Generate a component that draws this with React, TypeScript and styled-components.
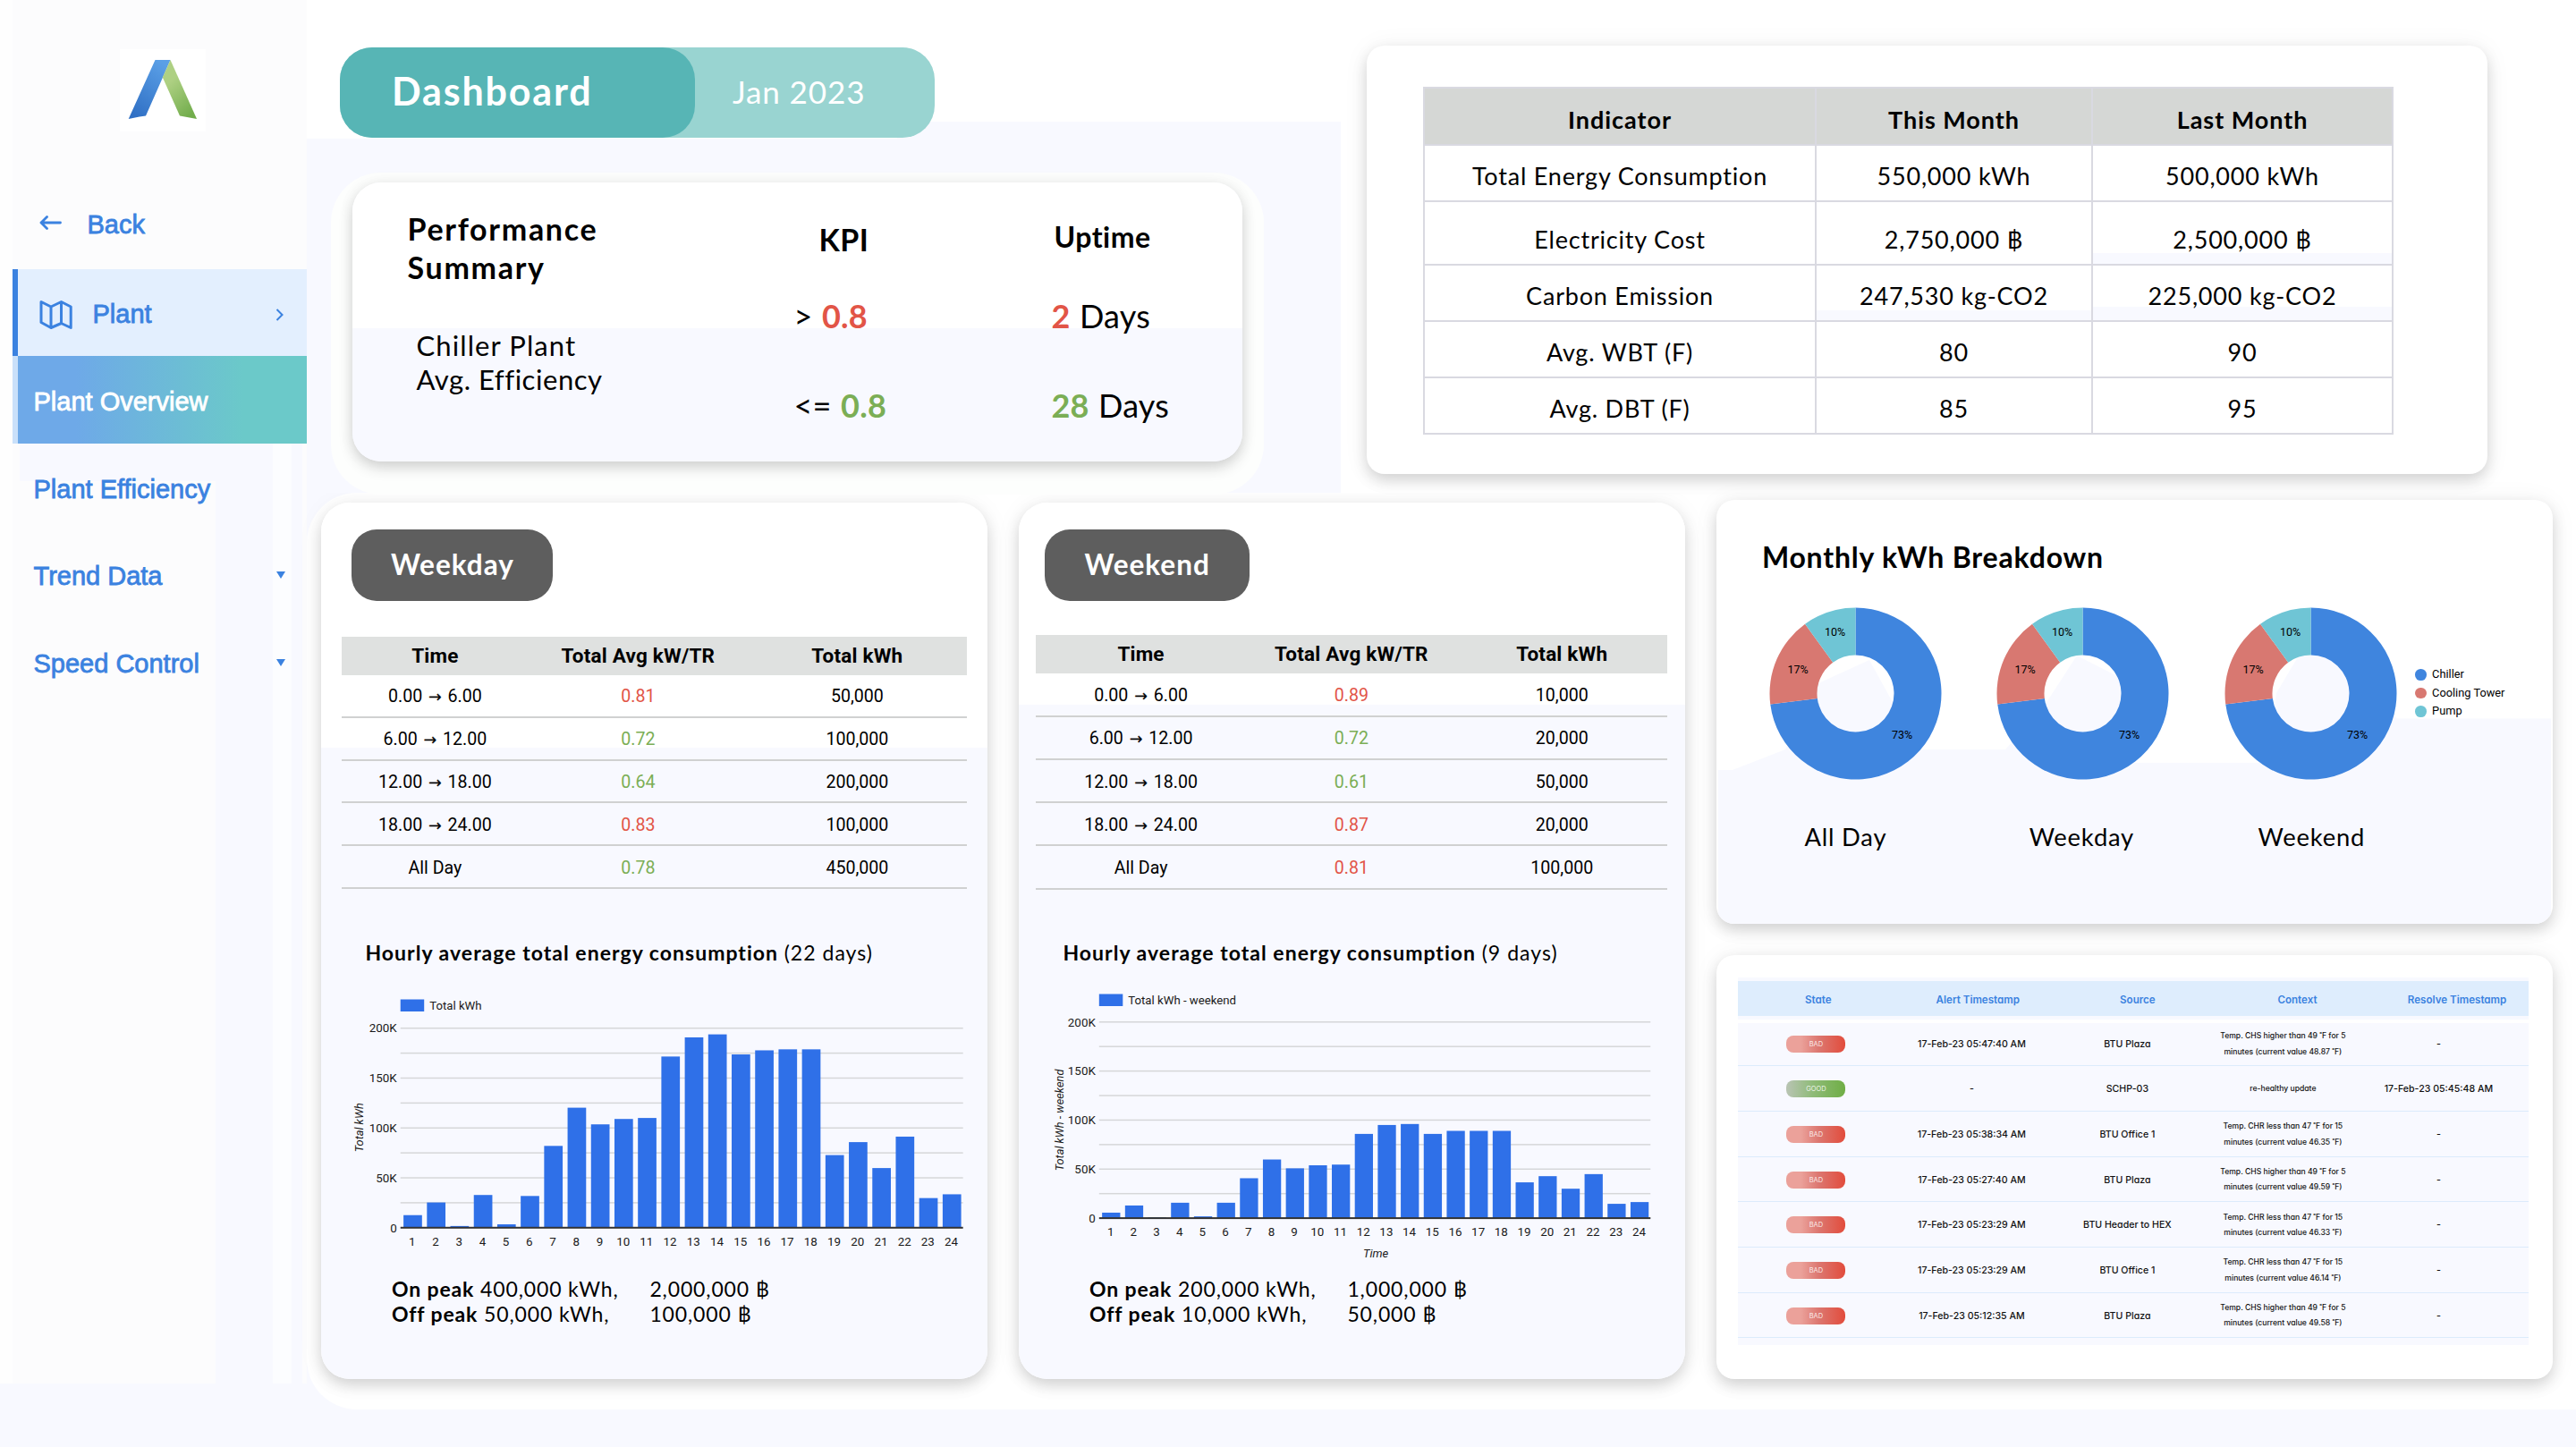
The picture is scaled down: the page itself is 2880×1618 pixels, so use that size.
import React from "react";
import styled, { createGlobalStyle, css } from "styled-components";

const BLUE = "#3b82e0";
const TINT = "#f8f9ff";
const RED = "#e25547";
const GREEN = "#7bae55";
const ROUND = `Lato, "Noto Sans", sans-serif`;

const GlobalStyle = createGlobalStyle`
  * { box-sizing: border-box; }
  body { margin: 0; background: ${TINT}; font-family: ${ROUND}; color: #000; }
`;

const Page = styled.div`
  display: flex;
  width: 2880px;
  height: 1618px;
  overflow: hidden;
  background: ${TINT};
`;

/* ---------- Sidebar ---------- */
const Sidebar = styled.nav`
  flex: none;
  width: 343px;
  height: 1547px;
  padding-left: 14px;
  background:
    linear-gradient(${TINT}, ${TINT}) 241px 496px / 64px 1051px no-repeat,
    linear-gradient(#fcfdff, #fcfdff) 305px 496px / 21px 1051px no-repeat,
    linear-gradient(${TINT}, ${TINT}) 326px 496px / 12px 1051px no-repeat,
    linear-gradient(${TINT}, ${TINT}) 22px 496px / 219px 42px no-repeat,
    linear-gradient(#fcfcfd, #fcfcfd) 14px 0 / 329px 100% no-repeat,
    #fefefe;
  font-family: "Liberation Sans", Arial, sans-serif;
  font-size: 29px;
  color: ${BLUE};
`;
const LogoBox = styled.div`
  display: flex;
  width: 96px;
  height: 92px;
  margin: 55px 0 48px 120px;
  background: #fff;
`;
const NavItem = styled.div<{ $h?: number; $active?: boolean; $selected?: boolean }>`
  display: flex;
  align-items: center;
  height: ${(p) => p.$h ?? 97.6}px;
  padding: 6px 26px 0 23.5px;
  -webkit-text-stroke: 0.8px currentColor;
  svg { flex: none; }
  ${(p) => p.$active && css`
    padding-top: 4px;
    border-left: 6px solid ${BLUE};
    background: #e3effe;
  `}
  ${(p) => p.$selected && css`
    padding-left: 17.5px;
    border-left: 6px solid #c9e0fa;
    color: #fff;
    background: linear-gradient(90deg, #6ea9e8 20%, #6bc9c9 78%);
    background-clip: padding-box;
  `}
`;
const NavText = styled.span<{ $gap?: number }>`
  flex: 1;
  margin-left: ${(p) => p.$gap ?? 0}px;
`;
const Caret = styled.i`
  border: 5.5px solid transparent;
  border-top: 8px solid ${BLUE};
  border-bottom: 0;
  margin: -4px -2px 0 0;
`;
const BackWrap = styled.span`
  display: flex;
  margin: -4px 0 0 6px;
`;

/* ---------- Frames ---------- */
const Main = styled.main`
  display: flex;
  flex-direction: column;
  flex: 1;
`;
const TopRow = styled.section`
  position: relative;
  display: flex;
  height: 551px;
  background:
    linear-gradient(${TINT}, ${TINT}) 0 155px / 1156px 396px no-repeat,
    linear-gradient(${TINT}, ${TINT}) 660px 136px / 496px 20px no-repeat,
    #fff;
`;
const TopLeft = styled.div`
  width: 1185px;
  padding: 53px 0 0 37px;
`;
const BottomRow = styled.section`
  display: flex;
  height: 1025px;
  padding: 11px 0 0 16.4px;
  border-radius: 56px 0 0 56px;
  background: #fff;
`;
const Card = styled.div`
  background: #fff;
  border-radius: 20px;
  box-shadow: 0 7px 16px rgba(0, 0, 0, 0.15), 0 2px 30px rgba(0, 0, 0, 0.06);
`;

/* ---------- Title pill ---------- */
const TitlePill = styled.header`
  display: flex;
  width: 665px;
  height: 101px;
  border-radius: 36px;
  background: #99d4d1;
  color: #fff;
`;
const TitleMain = styled.h1`
  width: 397px;
  margin: 0;
  padding-left: 58px;
  border-radius: 36px;
  background: #57b5b5;
  font-size: 43px;
  line-height: 97px;
  letter-spacing: 1.85px;
`;
const TitleMonth = styled.span`
  padding-left: 42px;
  font-size: 35px;
  line-height: 98px;
  letter-spacing: 0.9px;
`;

/* ---------- Performance summary ---------- */
const PerfCard = styled(Card)`
  display: flex;
  width: 995px;
  height: 311.5px;
  margin: 50px 0 0 13.5px;
  border-radius: 32px;
  background: linear-gradient(#fff 163px, ${TINT} 163px);
  box-shadow: 0 7px 16px rgba(0, 0, 0, 0.16), 0 0 18px rgba(0, 0, 0, 0.05), 0 13px 0 24px #fdfefd;
`;
const PerfNames = styled.div`
  flex: none;
  width: 494px;
  padding: 30px 0 0 62px;
`;
const PerfTitle = styled.h2`
  margin: 0;
  width: 260px;
  font-size: 34px;
  line-height: 43px;
  letter-spacing: 1.7px;
`;
const PerfMetric = styled.div`
  padding: 47px 0 0 10px;
  font-size: 31px;
  line-height: 38.4px;
`;
const Spaced = styled.div<{ $ls: number }>`
  letter-spacing: ${(p) => p.$ls}px;
`;
const PerfColumn = styled.div<{ $top: number; $width: number }>`
  flex: none;
  width: ${(p) => p.$width}px;
  padding-top: ${(p) => p.$top}px;
  line-height: 50px;
`;
const PerfHead = styled.h3<{ $indent: number; $size: number; $gap: number }>`
  margin: 0 0 ${(p) => p.$gap}px ${(p) => p.$indent}px;
  font-size: ${(p) => p.$size}px;
  letter-spacing: 0.5px;
`;
const PerfValue = styled.div`
  margin-bottom: 50px;
  font-size: 36px;
  letter-spacing: 0.2px;
  word-spacing: 1px;
`;
const Accent = styled.b<{ $tone: string }>`
  color: ${(p) => p.$tone};
`;

/* ---------- Indicator table ---------- */
const IndicatorCard = styled(Card)`
  width: 1253px;
  height: 479.5px;
  margin-top: 50.5px;
  padding: 46px 0 0 63px;
`;
const IndicatorTable = styled.table`
  width: 1083px;
  table-layout: fixed;
  border-collapse: collapse;
  font-size: 27px;
  letter-spacing: 0.8px;
  text-align: center;
  th, td { border: 2.5px solid #d9d9e1; padding: 7px 0 0; line-height: 30px; }
  th { background: #d5d7d5; height: 64px; padding-top: 9px; letter-spacing: 0.95px; }
`;
const IndicatorRow = styled.tr<{ $h: number; $drop?: boolean }>`
  height: ${(p) => p.$h}px;
  ${(p) => p.$drop && css`td { padding-top: 15px; }`}
`;
const ShadeCell = styled.td<{ $shade: number }>`
  background: linear-gradient(${TINT}, ${TINT}) bottom / 100% ${(p) => p.$shade}px no-repeat;
`;

/* ---------- Weekday / weekend ---------- */
const DayCard = styled(Card)<{ $split: number }>`
  display: flex;
  flex-direction: column;
  flex: none;
  width: 745px;
  height: 979.5px;
  margin-right: 35px;
  padding-top: 30px;
  border-radius: 32px;
  background: linear-gradient(#fff ${(p) => p.$split}px, ${TINT} ${(p) => p.$split}px);
`;
const DayPill = styled.h2<{ $x: number; $width: number }>`
  width: ${(p) => p.$width}px;
  height: 80px;
  margin: 0 0 0 ${(p) => p.$x}px;
  border-radius: 28px;
  background: #5e5e5e;
  color: #fff;
  font-size: 31.5px;
  line-height: 79px;
  letter-spacing: 1px;
  text-align: center;
`;
const EnergySlot = styled.div<{ $x: number; $top: number }>`
  height: 377px;
  padding: ${(p) => p.$top}px 0 0 ${(p) => p.$x}px;
`;
const EnergyGrid = styled.div<{ $cols: string; $width: number; $row: number }>`
  width: ${(p) => p.$width}px;
  font-family: Roboto, sans-serif;
  font-size: 19.6px;
  text-align: center;
  & > div {
    display: grid;
    grid-template-columns: ${(p) => p.$cols};
    align-items: center;
    height: ${(p) => p.$row}px;
  }
  & > div:first-child { height: 43px; }
`;
const EnergyHead = styled.div`
  padding-bottom: 1px;
  background: #dfe1e0;
  font-size: 22.5px;
  font-weight: 700;
  letter-spacing: 0.2px;
`;
const EnergyRow = styled.div`
  padding-top: 2px;
  border-bottom: 2px solid #d0d1d1;
`;
const Arrow = styled.span`
  margin: 0 2px;
  font-family: "DejaVu Sans", sans-serif;
  font-size: 17.5px;
  line-height: 1;
  -webkit-text-stroke: 0.2px currentColor;
`;
const Tone = styled.span<{ $tone: string }>`
  color: ${(p) => p.$tone};
`;
const HourlyTitle = styled.h3`
  margin: 0 0 0 49px;
  font-size: 23px;
  line-height: 33px;
  height: 32px;
  letter-spacing: 1.03px;
  white-space: nowrap;
  span { font-weight: 400; }
`;
const ChartSvg = styled.svg`
  flex: none;
  display: block;
  font-family: Roboto, sans-serif;
  font-size: 13.4px;
  fill: #1a1a1a;
`;
const Peaks = styled.div`
  display: grid;
  grid-template-columns: 288.5px auto;
  margin-left: 78.5px;
  font-size: 23px;
  line-height: 28px;
  letter-spacing: 0.87px;
  white-space: pre;
`;

/* ---------- Right column ---------- */
const RightColumn = styled.div`
  display: flex;
  flex-direction: column;
  width: 935px;
  margin-top: -3px;
  gap: 35px;
`;
const BreakdownCard = styled(Card)`
  position: relative;
  flex: none;
  height: 474px;
  padding-top: 43px;
`;
const BreakdownTint = styled.svg`
  position: absolute;
  left: 0;
  top: 0;
  border-radius: 20px;
`;
const BreakdownTitle = styled.h2`
  position: relative;
  margin: 0 0 0 50.5px;
  font-size: 32px;
  line-height: 42px;
  letter-spacing: 0.8px;
`;
const DonutRow = styled.div`
  position: relative;
  display: flex;
  align-items: center;
  height: 194px;
  margin-top: 34px;
  padding-left: 58.3px;
  gap: 61.6px;
`;
const DonutSvg = styled.svg`
  flex: none;
  font-family: Roboto, sans-serif;
  font-size: 12.5px;
  text-anchor: middle;
`;
const Legend = styled.ul`
  margin: 0 0 0 -41px;
  padding: 0;
  list-style: none;
  font: 12.8px/20.6px Roboto, sans-serif;
  li { display: flex; align-items: center; gap: 6px; white-space: nowrap; }
`;
const Dot = styled.i<{ $tone: string }>`
  width: 12.6px;
  height: 12.6px;
  border-radius: 50%;
  background: ${(p) => p.$tone};
`;
const DonutLabels = styled.div`
  position: relative;
  display: grid;
  grid-template-columns: 264px 264px 250px;
  margin: 47px 0 0 12px;
  font-size: 27.4px;
  line-height: 34px;
  letter-spacing: 0.8px;
  text-align: center;
`;

const AlertsCard = styled(Card)`
  flex: none;
  height: 473.5px;
  padding: 25px 0 0 24px;
`;
const AlertHead = styled.div`
  display: grid;
  grid-template-columns: repeat(5, 178.6px);
  align-items: center;
  overflow: hidden;
  width: 884px;
  height: 47px;
  padding-top: 2px;
  border: solid ${TINT};
  border-width: 4px 0;
  background: #deedfd;
  color: ${BLUE};
  font: 600 11.6px Inter, sans-serif;
  font-feature-settings: "cv11";
  text-align: center;
`;
const AlertBody = styled.div`
  width: 884px;
  height: 360px;
  margin-top: 4px;
  background: ${TINT};
`;
const AlertRow = styled.div`
  display: grid;
  grid-template-columns: repeat(5, 174px);
  align-items: center;
  justify-items: center;
  height: 50.7px;
  padding-top: 1.5px;
  border-bottom: 1.5px solid #dcebfc;
  font: 500 10.6px Inter, sans-serif;
  font-feature-settings: "cv11";
  color: #111;
  text-align: center;
  &:first-child { height: 48.3px; padding-top: 0; }
`;
const StatePill = styled.span<{ $good: boolean }>`
  width: 66px;
  height: 19px;
  border-radius: 8px;
  background: ${(p) => p.$good
    ? "linear-gradient(90deg, #b9c4b4, #8fbb78 45%, #6fae45)"
    : "linear-gradient(90deg, #eba19a 25%, #dc7770 55%, #e24c3c)"};
  color: rgba(255, 255, 255, 0.85);
  font-size: 7.5px;
  font-weight: 400;
  line-height: 20px;
`;
const Context = styled.span`
  font-size: 8.6px;
  line-height: 17.4px;
  white-space: pre-line;
`;

/* ---------- Data ---------- */
type EnergyRecord = [string, string, string, string];
const weekdayRows: EnergyRecord[] = [
  ["0.00", "6.00", "0.81", "50,000"],
  ["6.00", "12.00", "0.72", "100,000"],
  ["12.00", "18.00", "0.64", "200,000"],
  ["18.00", "24.00", "0.83", "100,000"],
  ["All Day", "", "0.78", "450,000"],
];
const weekendRows: EnergyRecord[] = [
  ["0.00", "6.00", "0.89", "10,000"],
  ["6.00", "12.00", "0.72", "20,000"],
  ["12.00", "18.00", "0.61", "50,000"],
  ["18.00", "24.00", "0.87", "20,000"],
  ["All Day", "", "0.81", "100,000"],
];
const weekdayHours = [12.6, 25.3, 1.7, 32.8, 3.4, 31.8, 82, 120.3, 103.6, 109, 110, 171.6, 190.8, 193.8, 173.7, 177.8, 178.8, 178.8, 72.8, 85.8, 59.8, 91.3, 29.7, 33.5];
const weekendHours = [5.6, 12.9, 0.8, 15.7, 1.8, 15.7, 40.7, 59.8, 50.8, 53.9, 54.6, 85.9, 95, 96, 85.9, 89, 89, 89, 36.5, 42.8, 30, 44.9, 14.6, 16.4];

const high = (v: string) => `Temp. CHS higher than 49 ˚F for 5\nminutes (current value ${v} ˚F)`;
const low = (v: string) => `Temp. CHR less than 47 ˚F for 15\nminutes (current value ${v} ˚F)`;
const alerts = [
  ["BAD", "17-Feb-23 05:47:40 AM", "BTU Plaza", high("48.87"), "-"],
  ["GOOD", "-", "SCHP-03", "re-healthy update", "17-Feb-23 05:45:48 AM"],
  ["BAD", "17-Feb-23 05:38:34 AM", "BTU Office 1", low("46.35"), "-"],
  ["BAD", "17-Feb-23 05:27:40 AM", "BTU Plaza", high("49.59"), "-"],
  ["BAD", "17-Feb-23 05:23:29 AM", "BTU Header to HEX", low("46.33"), "-"],
  ["BAD", "17-Feb-23 05:23:29 AM", "BTU Office 1", low("46.14"), "-"],
  ["BAD", "17-Feb-23 05:12:35 AM", "BTU Plaza", high("49.58"), "-"],
];
const sources = [
  ["Chiller", "#3f85de"],
  ["Cooling Tower", "#d87871"],
  ["Pump", "#6fc5d5"],
];

/* ---------- Parts ---------- */
const Logo = () => (
  <svg width="96" height="92" viewBox="134 55 96 92">
    <defs>
      <linearGradient id="lb" x1="0.7" y1="0" x2="0.2" y2="1">
        <stop offset="0" stopColor="#5a9fe6" />
        <stop offset="1" stopColor="#2f6fc4" />
      </linearGradient>
      <linearGradient id="lg" x1="0.2" y1="0" x2="0.7" y2="1">
        <stop offset="0.3" stopColor="#aed083" />
        <stop offset="1" stopColor="#72ad4c" />
      </linearGradient>
    </defs>
    <path d="M173.5 67H190.5L181.8 87L163 129.5L156 130.5L143.7 133Z" fill="url(#lb)" />
    <path d="M190.5 67L220 133L201 129.5L181.8 86.5Z" fill="url(#lg)" />
  </svg>
);
const BackIcon = () => (
  <svg width="25" height="18" viewBox="0 0 25 18" fill="none" stroke={BLUE} strokeWidth="2.8" strokeLinecap="round" strokeLinejoin="round">
    <path d="M23.5 9H2M8.5 2.5L2 9L8.5 15.5" />
  </svg>
);
const MapIcon = () => (
  <svg width="37" height="34" viewBox="43 333 37 34" fill="none" stroke={BLUE} strokeWidth="3" strokeLinejoin="round">
    <path d="M45 335.5L56 341L67.5 335.5L78.2 341V364.5L67.5 359.5L56 364.5L45 358.5ZM56 341V364M67.5 335.5V359.5" />
  </svg>
);
const ChevronIcon = () => (
  <svg width="9" height="14" viewBox="0 0 9 14" fill="none" stroke={BLUE} strokeWidth="2">
    <path d="M1.5 1L7.5 7L1.5 13" />
  </svg>
);

type EnergyTableProps = { rows: EnergyRecord[]; cols: string; width: number; rowHeight: number };
const EnergyTable = ({ rows, cols, width, rowHeight }: EnergyTableProps) => (
  <EnergyGrid $cols={cols} $width={width} $row={rowHeight}>
    <EnergyHead>
      <span>Time</span>
      <span>Total Avg kW/TR</span>
      <span>Total kWh</span>
    </EnergyHead>
    {rows.map(([from, to, avg, kwh]) => (
      <EnergyRow key={from}>
        <span>
          {from}
          {to && <> <Arrow>→</Arrow> {to}</>}
        </span>
        <Tone $tone={Number(avg) > 0.8 ? RED : GREEN}>{avg}</Tone>
        <span>{kwh}</span>
      </EnergyRow>
    ))}
  </EnergyGrid>
);

type ChartProps = {
  values: number[];
  left: number;
  width: number;
  top: number;
  height: number;
  legend: string;
  legendY: number;
  time?: boolean;
};
const HourChart = ({ values, left, width, top, height, legend, legendY, time }: ChartProps) => {
  const base = top + height;
  const pitch = width / 24;
  const axisX = time ? 50 : 47;
  const axisY = top + height / 2 - (time ? 0 : 0.5);
  return (
    <ChartSvg width="745" height="345.6" viewBox="0 0 745 345.6">
      <rect x={left} y={legendY} width="26.5" height="13.5" fill="#2f70e8" />
      <text x={left + 32.5} y={legendY + 11.6} fontSize="13.2">{legend}</text>
      {Array.from({ length: 8 }, (_, i) => (
        <rect key={i} x={left} y={top + (height * i) / 8 - 0.75} width={width} height="1.5" fill="#d6d7d9" />
      ))}
      {["200K", "150K", "100K", "50K", "0"].map((label, i) => (
        <text key={label} x={left - 4} y={top + (height * i) / 4 + 4.8} textAnchor="end">{label}</text>
      ))}
      {values.map((v, i) => (
        <g key={i}>
          <rect x={left + pitch * i + pitch * 0.13} y={base - (v * height) / 200} width={pitch * 0.79} height={(v * height) / 200} fill="#2f70e8" />
          <text x={left + pitch * (i + 0.5)} y={base + 20.4} textAnchor="middle">{i + 1}</text>
        </g>
      ))}
      <rect x={left} y={base - 1} width={width} height="2" fill="#333" />
      <text fontStyle="italic" fontSize="12.8" textAnchor="middle" transform={`translate(${axisX} ${axisY}) rotate(-90)`}>{legend}</text>
      {time && <text x={left + width / 2 + 1} y={base + 43.5} fontStyle="italic" fontSize="13" textAnchor="middle">Time</text>}
    </ChartSvg>
  );
};

const point = (share: number, r: number) => {
  const a = share * Math.PI * 2;
  return `${(96.5 + r * Math.sin(a)).toFixed(2)} ${(96.5 - r * Math.cos(a)).toFixed(2)}`;
};
const ring = (from: number, to: number) => {
  const big = to - from > 0.5 ? 1 : 0;
  return `M${point(from, 96)}A96 96 0 ${big} 1 ${point(to, 96)}L${point(to, 43)}A43 43 0 ${big} 0 ${point(from, 43)}Z`;
};
const Donut = () => (
  <DonutSvg width="193" height="193" viewBox="0 0 193 193">
    <path d={ring(0, 0.73)} fill="#3f85de" />
    <path d={ring(0.73, 0.9)} fill="#d87871" />
    <path d={ring(0.9, 0.99999)} fill="#6fc5d5" />
    <text x="73.5" y="32">10%</text>
    <text x="32" y="74">17%</text>
    <text x="148.5" y="147">73%</text>
  </DonutSvg>
);

export default function App() {
  return (
    <>
      <GlobalStyle />
      <Page>
        <Sidebar>
          <LogoBox><Logo /></LogoBox>
          <NavItem $h={106}><BackWrap><BackIcon /></BackWrap><NavText $gap={29}>Back</NavText></NavItem>
          <NavItem $active $h={97}><MapIcon /><NavText $gap={23}>Plant</NavText><ChevronIcon /></NavItem>
          <NavItem $selected><NavText>Plant Overview</NavText></NavItem>
          <NavItem><NavText>Plant Efficiency</NavText></NavItem>
          <NavItem><NavText>Trend Data</NavText><Caret /></NavItem>
          <NavItem><NavText>Speed Control</NavText><Caret /></NavItem>
        </Sidebar>
        <Main>
          <TopRow>
            <TopLeft>
              <TitlePill>
                <TitleMain>Dashboard</TitleMain>
                <TitleMonth>Jan 2023</TitleMonth>
              </TitlePill>
              <PerfCard>
                <PerfNames>
                  <PerfTitle>Performance Summary</PerfTitle>
                  <PerfMetric>
                    <Spaced $ls={1.1}>Chiller Plant</Spaced>
                    <Spaced $ls={0.55}>Avg. Efficiency</Spaced>
                  </PerfMetric>
                </PerfNames>
                <PerfColumn $top={39} $width={288}>
                  <PerfHead $indent={28} $size={34} $gap={35}>KPI</PerfHead>
                  <PerfValue>&gt; <Accent $tone={RED}>0.8</Accent></PerfValue>
                  <PerfValue>&lt;= <Accent $tone={GREEN}>0.8</Accent></PerfValue>
                </PerfColumn>
                <PerfColumn $top={36} $width={180}>
                  <PerfHead $indent={3} $size={32} $gap={38}>Uptime</PerfHead>
                  <PerfValue><Accent $tone={RED}>2</Accent> Days</PerfValue>
                  <PerfValue><Accent $tone={GREEN}>28</Accent> Days</PerfValue>
                </PerfColumn>
              </PerfCard>
            </TopLeft>
            <IndicatorCard>
              <IndicatorTable>
                <colgroup><col width="438" /><col width="309" /><col width="336" /></colgroup>
                <thead>
                  <tr><th>Indicator</th><th>This Month</th><th>Last Month</th></tr>
                </thead>
                <tbody>
                  <IndicatorRow $h={63}><td>Total Energy Consumption</td><td>550,000 kWh</td><td>500,000 kWh</td></IndicatorRow>
                  <IndicatorRow $h={71.8} $drop><td>Electricity Cost</td><td>2,750,000 ฿</td><ShadeCell $shade={12}>2,500,000 ฿</ShadeCell></IndicatorRow>
                  <IndicatorRow $h={63}><td>Carbon Emission</td><ShadeCell $shade={11}>247,530 kg-CO2</ShadeCell><ShadeCell $shade={15}>225,000 kg-CO2</ShadeCell></IndicatorRow>
                  <IndicatorRow $h={63}><td>Avg. WBT (F)</td><td>80</td><td>90</td></IndicatorRow>
                  <IndicatorRow $h={63}><td>Avg. DBT (F)</td><td>85</td><td>95</td></IndicatorRow>
                </tbody>
              </IndicatorTable>
            </IndicatorCard>
          </TopRow>
          <BottomRow>
            <DayCard $split={274}>
              <DayPill $x={34} $width={225}>Weekday</DayPill>
              <EnergySlot $x={22.5} $top={40}>
                <EnergyTable rows={weekdayRows} cols="209px 245px 245px" width={699} rowHeight={47.8} />
              </EnergySlot>
              <HourlyTitle>Hourly average total energy consumption <span>(22 days)</span></HourlyTitle>
              <HourChart values={weekdayHours} left={88.7} width={629} top={68.7} height={223.1} legend="Total kWh" legendY={36.5} />
              <Peaks>
                <span><b>On peak</b> 400,000 kWh,</span><span>2,000,000 ฿</span>
                <span><b>Off peak</b> 50,000 kWh,</span><span>100,000 ฿</span>
              </Peaks>
            </DayCard>
            <DayCard $split={225.5}>
              <DayPill $x={29} $width={228.5}>Weekend</DayPill>
              <EnergySlot $x={18.5} $top={38.3}>
                <EnergyTable rows={weekendRows} cols="repeat(3, 1fr)" width={706} rowHeight={48.3} />
              </EnergySlot>
              <HourlyTitle>Hourly average total energy consumption <span>(9 days)</span></HourlyTitle>
              <HourChart values={weekendHours} left={89.8} width={616.5} top={61.8} height={219.3} legend="Total kWh - weekend" legendY={30.5} time />
              <Peaks>
                <span><b>On peak</b> 200,000 kWh,</span><span>1,000,000 ฿</span>
                <span><b>Off peak</b> 10,000 kWh,</span><span>50,000 ฿</span>
              </Peaks>
            </DayCard>
            <RightColumn>
              <BreakdownCard>
                <BreakdownTint width="935" height="474" viewBox="1919 559 935 474">
                  <path fill={TINT} d="M1921 861H1937L1996 838L2033 764L2090 738L2145 838H2242L2285 790L2322 733L2369 757L2380 853H2535L2545 775L2570 733H2600L2625 755L2680 803.5H2852V1033H1921Z" />
                </BreakdownTint>
                <BreakdownTitle>Monthly kWh Breakdown</BreakdownTitle>
                <DonutRow>
                  <Donut />
                  <Donut />
                  <Donut />
                  <Legend>
                    {sources.map(([name, tone]) => <li key={name}><Dot $tone={tone} />{name}</li>)}
                  </Legend>
                </DonutRow>
                <DonutLabels><span>All Day</span><span>Weekday</span><span>Weekend</span></DonutLabels>
              </BreakdownCard>
              <AlertsCard>
                <AlertHead>
                  <span>State</span><span>Alert Timestamp</span><span>Source</span><span>Context</span><span>Resolve Timestamp</span>
                </AlertHead>
                <AlertBody>
                  {alerts.map(([state, time, source, context, resolved], i) => (
                    <AlertRow key={i}>
                      <StatePill $good={state === "GOOD"}>{state}</StatePill>
                      <span>{time}</span>
                      <span>{source}</span>
                      <Context>{context}</Context>
                      <span>{resolved}</span>
                    </AlertRow>
                  ))}
                </AlertBody>
              </AlertsCard>
            </RightColumn>
          </BottomRow>
        </Main>
      </Page>
    </>
  );
}
